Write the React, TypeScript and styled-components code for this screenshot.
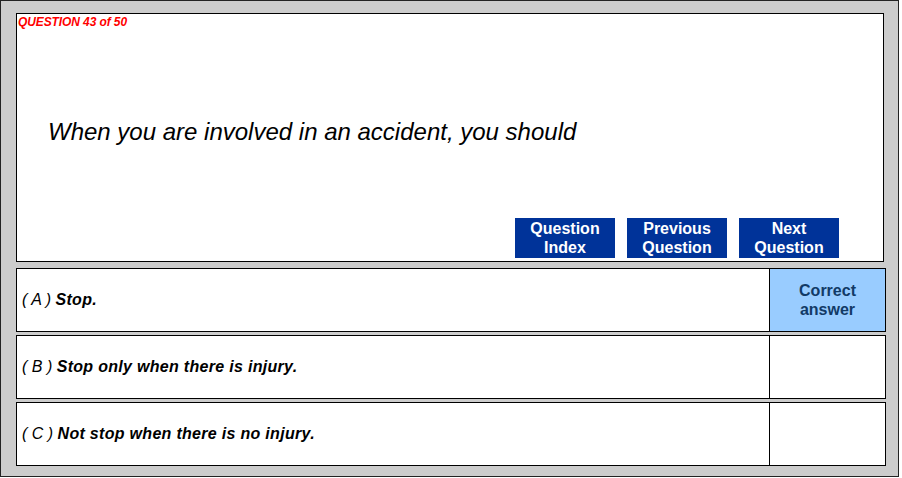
import React from "react";
import styled, { createGlobalStyle } from "styled-components";

const GlobalStyle = createGlobalStyle`
  html, body {
    margin: 0;
    padding: 0;
    background: #ffffff;
  }
  body {
    font-family: "Liberation Sans", Arial, sans-serif;
  }
`;

const Frame = styled.div`
  box-sizing: border-box;
  width: 899px;
  height: 477px;
  border: 1px solid #222;
  background: #cccccc;
  padding: 12px 12px 10px 15px;
  display: flex;
  flex-direction: column;
`;

const QuestionPanel = styled.div`
  box-sizing: border-box;
  height: 249px;
  margin-right: 2px;
  border: 1px solid #000;
  background: #ffffff;
  display: flex;
  flex-direction: column;
`;

const Counter = styled.div`
  padding: 1px 0 0 1px;
  font-size: 12px;
  line-height: 14px;
  font-weight: bold;
  font-style: italic;
  color: #ff0000;
  letter-spacing: -0.1px;
`;

const QuestionText = styled.div`
  margin: 89px 0 0 31px;
  font-size: 24px;
  line-height: 28px;
  font-style: italic;
  color: #000;
`;

const NavBar = styled.div`
  margin: auto 44px 3px 0;
  display: flex;
  justify-content: flex-end;
  gap: 12px;
`;

const NavButton = styled.button`
  box-sizing: border-box;
  width: 100px;
  height: 40px;
  padding: 0;
  border: none;
  background: #003399;
  color: #ffffff;
  font-family: "Liberation Sans", Arial, sans-serif;
  font-size: 16px;
  line-height: 19px;
  font-weight: bold;
  text-align: center;
  cursor: pointer;
`;

const AnswerList = styled.div`
  margin-top: 6px;
  display: flex;
  flex-direction: column;
  gap: 3px;
`;

const AnswerRow = styled.div`
  box-sizing: border-box;
  height: 64px;
  border: 1px solid #000;
  background: #ffffff;
  display: flex;
`;

const AnswerText = styled.div`
  flex: 1;
  padding-left: 5px;
  display: flex;
  align-items: center;
  font-size: 16px;
  font-style: italic;
  color: #000;
  white-space: pre;
`;

const Letter = styled.span`
  font-weight: normal;
`;

const Choice = styled.span`
  font-weight: bold;
  letter-spacing: 0.3px;
`;

const ResultCell = styled.div<{ $correct?: boolean }>`
  box-sizing: border-box;
  width: 116px;
  border-left: 1px solid #000;
  background: ${(p) => (p.$correct ? "#99ccff" : "#ffffff")};
  display: flex;
  align-items: center;
  justify-content: center;
  text-align: center;
  font-size: 16px;
  line-height: 19px;
  font-weight: bold;
  color: #123a66;
`;

const answers = [
  { letter: "A", text: "Stop.", correct: true },
  { letter: "B", text: "Stop only when there is injury.", correct: false },
  { letter: "C", text: "Not stop when there is no injury.", correct: false },
];

export default function App() {
  return (
    <>
      <GlobalStyle />
      <Frame>
        <QuestionPanel>
          <Counter>QUESTION 43 of 50</Counter>
          <QuestionText>When you are involved in an accident, you should</QuestionText>
          <NavBar>
            <NavButton>
              Question
              <br />
              Index
            </NavButton>
            <NavButton>
              Previous
              <br />
              Question
            </NavButton>
            <NavButton>
              Next
              <br />
              Question
            </NavButton>
          </NavBar>
        </QuestionPanel>
        <AnswerList>
          {answers.map((a) => (
            <AnswerRow key={a.letter}>
              <AnswerText>
                <Letter>( {a.letter} ) </Letter>
                <Choice>{a.text}</Choice>
              </AnswerText>
              <ResultCell $correct={a.correct}>
                {a.correct && (
                  <span>
                    Correct
                    <br />
                    answer
                  </span>
                )}
              </ResultCell>
            </AnswerRow>
          ))}
        </AnswerList>
      </Frame>
    </>
  );
}
